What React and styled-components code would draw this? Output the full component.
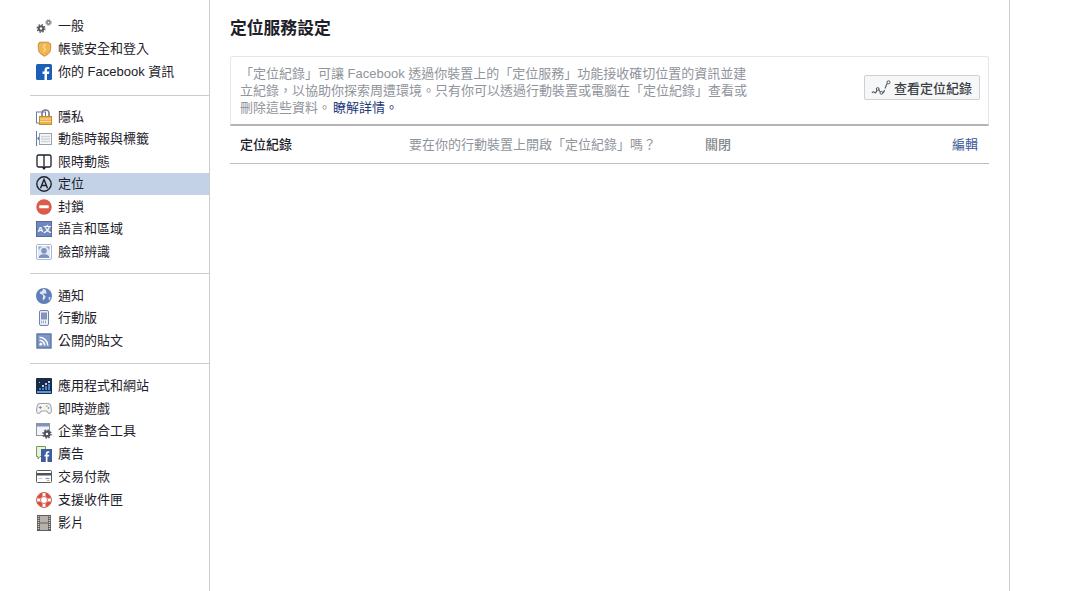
import React from 'react';
import styled, { createGlobalStyle } from 'styled-components';

const Global = createGlobalStyle`
  html, body {
    margin: 0;
    padding: 0;
    background: #fff;
  }
  body {
    font-family: "Liberation Sans", "Noto Sans CJK TC", sans-serif;
    font-size: 13px;
    color: #1d2129;
  }
`;

const Page = styled.div`
  display: flex;
  width: 1010px;
  height: 591px;
  overflow: hidden;
  box-sizing: border-box;
  border-right: 1px solid #cccccc;
`;

const Sidebar = styled.nav`
  width: 210px;
  flex: none;
  box-sizing: border-box;
  padding: 15.1px 0 0 30px;
  border-right: 1px solid #cccccc;
`;

const Section = styled.ul`
  list-style: none;
  margin: 0;
  padding: ${(p) => p.$pad};
  border-bottom: ${(p) => (p.$last ? 'none' : '1px solid #cccccc')};
`;

const Item = styled.li`
  display: flex;
  align-items: center;
  height: ${(p) => p.$height}px;
  padding-left: 6px;
  gap: 6px;
  line-height: 16px;
  white-space: nowrap;
  background: ${(p) => (p.$active ? '#c4d2e7' : 'transparent')};
  color: #1d2129;
`;

const IconBox = styled.svg`
  width: ${(p) => p.$width || 16}px;
  height: 16px;
  flex: none;
  display: block;
`;

const Main = styled.main`
  flex: 1;
  box-sizing: border-box;
  padding: 0 20px;
`;

const Title = styled.h1`
  margin: 0;
  padding-top: 20px;
  height: 56px;
  box-sizing: border-box;
  font-size: 16.8px;
  line-height: 18px;
  font-weight: 700;
  color: #1d2129;
`;

const Notice = styled.section`
  display: flex;
  justify-content: space-between;
  height: 70px;
  box-sizing: border-box;
  padding: 8px 8px 0 9px;
  background: #fff;
  border: 1px solid #e5e6e9;
  border-bottom: 2px solid #b4b4b4;
  border-radius: 3px 3px 0 0;
`;

const NoticeText = styled.p`
  margin: 0;
  color: #90949c;
  line-height: 17px;
  white-space: nowrap;
`;

const LearnMore = styled.a`
  color: #23397a;
  margin-left: 2px;
  text-decoration: none;
`;

const HistoryButton = styled.button`
  display: flex;
  align-items: center;
  gap: 3px;
  align-self: flex-start;
  margin-top: 10px;
  height: 25px;
  width: 116px;
  box-sizing: border-box;
  padding: 0 0 0 6px;
  background: #f6f7f9;
  border: 1px solid #ced0d4;
  border-radius: 2px;
  color: #3b3f46;
  font: 500 13px "Liberation Sans", "Noto Sans CJK TC", sans-serif;
  white-space: nowrap;
`;

const Row = styled.div`
  display: grid;
  grid-template-columns: 169px 296px 1fr auto;
  align-items: center;
  height: 38px;
  box-sizing: border-box;
  padding: 0 11px 2px 10px;
  border-bottom: 1px solid #bdbdbd;
`;

const RowLabel = styled.span`
  font-weight: 500;
  color: #1d2129;
`;

const RowValue = styled.span`
  color: ${(p) => (p.$strong ? '#85888f' : '#90949c')};
  font-weight: ${(p) => (p.$strong ? 500 : 400)};
`;

const EditLink = styled.a`
  color: #365899;
  text-decoration: none;
`;

// eight teeth round a body with a small hole
const Gear = ({ cx, cy, r, color }) => (
  <g>
    <circle
      cx={cx}
      cy={cy}
      r={r * 0.85}
      fill="none"
      stroke={color}
      strokeWidth={r * 0.3}
      strokeDasharray={`${r * 0.33} ${r * 0.3376}`}
    />
    <circle cx={cx} cy={cy} r={r * 0.72} fill={color} />
    <circle cx={cx} cy={cy} r={r * 0.26} fill="#fff" />
  </g>
);

const GearsIcon = () => (
  <IconBox viewBox="0 0 16 16">
    <Gear cx={5} cy={10.500} r={4.500} color="#55585e" />
    <Gear cx={12.500} cy={4.500} r={3.300} color="#7c8087" />
  </IconBox>
);

const BadgeIcon = () => (
  <IconBox viewBox="0 0 16 16">
    <path d="M3.500 1.200h9l.8 1.300 1.400.2v5c0 .9-.5 1.200-.5 2.200 0 2.300-3.200 3.700-5.700 5.400-2.500-1.700-5.700-3.100-5.700-5.400 0-1-.5-1.300-.5-2.200v-5l1.400-.2z" fill="#f2b550" stroke="#b98a3c" strokeWidth=".9" />
    <path d="M9.800 4c-2.200 0-2.800 1.800-1.500 2.800s1.500 3.200-1.100 3.700" fill="none" stroke="#f9d790" strokeWidth="1.500" />
  </IconBox>
);

const FacebookIcon = () => (
  <IconBox viewBox="0 0 16 16">
    <rect width="16" height="16" rx="1.500" fill="#1c5fb8" />
    <path d="M11 16V10h2l.3-2.400H11V6.200c0-.7.2-1.100 1.100-1.100h1.200V3c-.3 0-1-.1-1.800-.1-1.800 0-3 1.100-3 3.100v1.600h-2V10h2v6z" fill="#fff" />
  </IconBox>
);

const LockIcon = () => (
  <IconBox viewBox="0 0 16 16">
    <rect x=".5" y="3" width="9" height="11" fill="#fff" stroke="#5f7cb4" />
    <path d="M6 7V4.200a3.500 3.200 0 0 1 7 0V7" fill="none" stroke="#77797d" strokeWidth="1.600" />
    <rect x="3.500" y="7.500" width="12" height="8" fill="#efb04a" stroke="#c48a2c" />
    <path d="M4 10h11M4 12.500h11" stroke="#f9dca0" />
  </IconBox>
);

const TimelineIcon = () => (
  <IconBox viewBox="0 0 16 16">
    <path d="M.5 0v15" stroke="#5f7cb4" />
    <path d="M1 7.500l2.500-2.500v5z" fill="#5f7cb4" />
    <rect x="3.500" y="2.500" width="12" height="11" fill="#f7f8fa" stroke="#9aa0ac" />
    <path d="M5 5.500h9M5 8h9M5 10.500h9" stroke="#cfd3da" strokeWidth="1.300" />
  </IconBox>
);

const BookIcon = () => (
  <IconBox viewBox="0 0 16 16">
    <path d="M8 1H2.500A1.500 1.500 0 0 0 1 2.500v9A1.500 1.500 0 0 0 2.500 13H6.500L8 15l1.500-2h4a1.500 1.500 0 0 0 1.500-1.500v-9A1.500 1.500 0 0 0 13.500 1H8zM8 1v13" fill="none" stroke="#1d2129" strokeWidth="1.300" strokeLinejoin="round" />
  </IconBox>
);

const LocationIcon = () => (
  <IconBox viewBox="0 0 16 16">
    <circle cx="8" cy="8" r="7.200" fill="none" stroke="#1d2129" strokeWidth="1.400" />
    <path d="M4.500 12.300L8 3.500l3.500 8.800M5.800 9.500h4.400" fill="none" stroke="#1d2129" strokeWidth="1.400" />
  </IconBox>
);

const BlockIcon = () => (
  <IconBox viewBox="0 0 16 16">
    <circle cx="8" cy="8" r="7.700" fill="#dc5a47" />
    <rect x="3.200" y="6.300" width="9.600" height="3" rx=".5" fill="#fff" />
  </IconBox>
);

const LanguageGlyphs = styled.text`
  font: 700 8px "Liberation Sans", "Noto Sans CJK TC", sans-serif;
  fill: #fff;
`;

const LanguageIcon = () => (
  <IconBox viewBox="0 0 16 16">
    <rect x=".5" y=".5" width="15" height="15" fill="#6f87bb" stroke="#54699c" />
    <LanguageGlyphs x="1.600" y="11">A文</LanguageGlyphs>
  </IconBox>
);

const FaceIcon = () => (
  <IconBox viewBox="0 0 16 16">
    <rect x=".5" y=".5" width="15" height="15" rx="1.500" fill="#fff" stroke="#a9b7d3" />
    <rect x="2" y="2" width="12" height="12" fill="#e3e8f2" />
    <circle cx="8" cy="6.800" r="2.800" fill="#7d93c0" />
    <path d="M2.500 14c.5-3 3.200-3.700 5.500-3.700s5 .7 5.500 3.700z" fill="#7d93c0" />
    <path d="M3 5.500V3h2.500M10.500 3H13v2.500" fill="none" stroke="#7d93c0" />
  </IconBox>
);

const GlobeIcon = () => (
  <IconBox viewBox="0 0 16 16">
    <circle cx="8" cy="8" r="8" fill="#5f7fb8" />
    <path d="M6.500.800c1.300 1.300-.5 2.300-2 3-1.300.6-.8 2 .3 2.300 1.800.5 2.700 1.200 2.200 3-.4 1.200-.6 2.400.3 3.300.8-1 2.700-2.300 2.200-4.100-.3-1-1.900-1.100-2.300-2.300.7-.8 2-.5 3.300-.2.300-1.200-.6-2.100-.4-3.200C8.900 1.100 7.700.700 6.500.800zM12.500 9.500l1.800-.8c.3 1.400-.2 2.800-1.200 3.800z" fill="#dfe6f3" />
  </IconBox>
);

const PhoneIcon = () => (
  <IconBox viewBox="0 0 16 16">
    <rect x="3.500" y=".5" width="9" height="15" rx="1.500" fill="#eef0f5" stroke="#6f83ad" />
    <rect x="5" y="2.500" width="6" height="7" fill="#8095bd" />
    <path d="M5 11.200h6M5 12.800h6" stroke="#7b8caf" strokeDasharray="1 1" />
  </IconBox>
);

const RssIcon = () => (
  <IconBox viewBox="0 0 16 16">
    <rect x="1" y="1" width="14" height="14" fill="#7f95c2" stroke="#5d75a8" strokeWidth="1.400" />
    <circle cx="4.800" cy="11.200" r="1.400" fill="#fff" />
    <path d="M3.500 7.300a5.200 5.200 0 0 1 5.200 5.200M3.500 4.300a8.200 8.200 0 0 1 8.200 8.200" fill="none" stroke="#fff" strokeWidth="1.600" />
  </IconBox>
);

const AppsIcon = () => (
  <IconBox viewBox="0 0 16 16">
    <rect width="16" height="16" rx="1" fill="#1a2a4a" />
    <path d="M1 13h14v2H1z" fill="#5a9bdc" />
    <path d="M3 10h2v2H3zM6 10h2v2H6zM9 8h2v4H9zM12 6h2v6h-2z" fill="#4a80c4" />
    <path d="M6 7h2v2H6zM9 5h2v2H9zM12 3h2v2h-2zM3 4h1v1H3z" fill="#b9cfe9" />
  </IconBox>
);

const GameIcon = () => (
  <IconBox viewBox="0 0 16 16">
    <path d="M4 2.500h8c1.700 0 2.800 1.500 3.300 5 .4 3-.3 5-1.700 5-1.500 0-2-2.500-3.600-2.500H6C4.400 10 3.900 12.500 2.400 12.500 1 12.500.3 10.500.7 7.500c.5-3.500 1.600-5 3.300-5z" fill="#f4f4f5" stroke="#a3a6ab" strokeWidth="1.100" />
    <path d="M2.800 6.500h3M4.300 5v3" stroke="#888b91" />
    <circle cx="10.800" cy="5.200" r=".9" fill="#d9b13f" />
    <circle cx="12.500" cy="7" r=".9" fill="#7b9fd8" />
  </IconBox>
);

const BizIcon = () => (
  <IconBox viewBox="0 0 16 16">
    <rect x=".5" y=".5" width="13" height="12" fill="#f4f5f8" stroke="#8d94a3" />
    <rect x="1" y="1" width="12" height="2.500" fill="#7e93bd" />
    <Gear cx={11} cy={11} r={4.700} color="#4f5259" />
  </IconBox>
);

const AdsIcon = () => (
  <IconBox viewBox="0 0 16 16">
    <path d="M.5.500h9v10H4l-2 2.500v-2.500H.5z" fill="#e9f2de" stroke="#6fa04f" />
    <rect x="5" y="3" width="11" height="13" fill="#3f5d9e" />
    <path d="M11.500 16v-5.500h1.600l.2-1.800h-1.800V7.600c0-.5.200-.8.800-.8h1V5.200H12c-1.400 0-2.200.8-2.200 2.200v1.300H8.500v1.800h1.300V16z" fill="#fff" />
  </IconBox>
);

const CardIcon = () => (
  <IconBox viewBox="0 0 16 16">
    <rect x=".5" y="1.500" width="15" height="12" rx="1" fill="#fff" stroke="#5a5d63" />
    <rect x="1" y="4" width="14" height="2.500" fill="#4f5259" />
    <path d="M9.500 9.500h4" stroke="#7b9fd8" strokeWidth="1.200" />
    <path d="M11 11.500h2.500" stroke="#e2a94f" />
    <path d="M2.500 9.500h4" stroke="#c9cbd0" />
  </IconBox>
);

const LifebuoyIcon = () => (
  <IconBox viewBox="0 0 16 16">
    <circle cx="8" cy="8" r="5.500" fill="none" stroke="#e2483a" strokeWidth="3.400" />
    <path d="M8 1v3.500M8 11.500V15M1 8h3.500M11.500 8H15" stroke="#fff" strokeWidth="3" />
    <circle cx="8" cy="8" r="7.500" fill="none" stroke="#b4453a" strokeWidth=".8" />
    <circle cx="8" cy="8" r="3.500" fill="#fff" stroke="#b4453a" strokeWidth=".7" />
  </IconBox>
);

const FilmIcon = () => (
  <IconBox viewBox="0 0 16 16">
    <rect x="1" y="0" width="14" height="16" fill="#5f5d5b" />
    <rect x="4" y="1" width="8" height="6.500" fill="#b8b1a9" />
    <rect x="4" y="8.500" width="8" height="6.500" fill="#b8b1a9" />
    <path d="M2.500 1v14M13.500 1v14" stroke="#cfcfcf" strokeWidth="1.500" strokeDasharray="1 1" />
  </IconBox>
);

const TrendIcon = () => (
  <IconBox viewBox="0 0 20 16" $width={20}>
    <path d="M1 13c.8-1.500 1.800-1.500 2.600-.5.800 1 1.400.2 2.400-2.300M7.400 9.500l2 2.500M11.500 12.500c1 .5 1.500-.5 2-2.500M14 8.500c.6-1.500 1.400-4 2.600-5.500" fill="none" stroke="#4b4f56" strokeWidth="1.100" />
    <circle cx="6.700" cy="9" r="1.400" fill="#f6f7f9" stroke="#4b4f56" />
    <circle cx="10.400" cy="12.800" r="1.400" fill="#f6f7f9" stroke="#4b4f56" />
    <circle cx="17.500" cy="2.300" r="1.500" fill="#f6f7f9" stroke="#4b4f56" />
  </IconBox>
);

const sections = [
  {
    pad: '0 0 11.400px',
    height: 22.8,
    items: [
      { label: '一般', Icon: GearsIcon },
      { label: '帳號安全和登入', Icon: BadgeIcon },
      { label: '你的 Facebook 資訊', Icon: FacebookIcon },
    ],
  },
  {
    pad: '9.400px 0 10.100px',
    height: 22.5,
    items: [
      { label: '隱私', Icon: LockIcon },
      { label: '動態時報與標籤', Icon: TimelineIcon },
      { label: '限時動態', Icon: BookIcon },
      { label: '定位', Icon: LocationIcon, active: true },
      { label: '封鎖', Icon: BlockIcon },
      { label: '語言和區域', Icon: LanguageIcon },
      { label: '臉部辨識', Icon: FaceIcon },
    ],
  },
  {
    pad: '10.300px 0 10.300px',
    height: 22.8,
    items: [
      { label: '通知', Icon: GlobeIcon },
      { label: '行動版', Icon: PhoneIcon },
      { label: '公開的貼文', Icon: RssIcon },
    ],
  },
  {
    pad: '10.500px 0 0',
    height: 22.8,
    last: true,
    items: [
      { label: '應用程式和網站', Icon: AppsIcon },
      { label: '即時遊戲', Icon: GameIcon },
      { label: '企業整合工具', Icon: BizIcon },
      { label: '廣告', Icon: AdsIcon },
      { label: '交易付款', Icon: CardIcon },
      { label: '支援收件匣', Icon: LifebuoyIcon },
      { label: '影片', Icon: FilmIcon },
    ],
  },
];

export default function App() {
  return (
    <>
      <Global />
      <Page>
        <Sidebar>
          {sections.map((section, i) => (
            <Section key={i} $pad={section.pad} $last={section.last}>
              {section.items.map(({ label, Icon, active }) => (
                <Item key={label} $active={active} $height={section.height}>
                  <Icon />
                  {label}
                </Item>
              ))}
            </Section>
          ))}
        </Sidebar>
        <Main>
          <Title>定位服務設定</Title>
          <Notice>
            <NoticeText>
              「定位紀錄」可讓 Facebook 透過你裝置上的「定位服務」功能接收確切位置的資訊並建
              <br />
              立紀錄，以協助你探索周遭環境。只有你可以透過行動裝置或電腦在「定位紀錄」查看或
              <br />
              刪除這些資料。
              <LearnMore href="#">瞭解詳情。</LearnMore>
            </NoticeText>
            <HistoryButton type="button">
              <TrendIcon />
              查看定位紀錄
            </HistoryButton>
          </Notice>
          <Row>
            <RowLabel>定位紀錄</RowLabel>
            <RowValue>要在你的行動裝置上開啟「定位紀錄」嗎？</RowValue>
            <RowValue $strong>關閉</RowValue>
            <EditLink href="#">編輯</EditLink>
          </Row>
        </Main>
      </Page>
    </>
  );
}
